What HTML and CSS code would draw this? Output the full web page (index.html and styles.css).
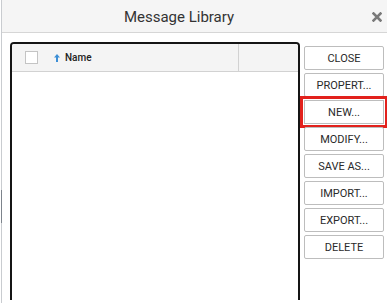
FILE: index.html
```html
<!DOCTYPE html>
<html lang="en">
<head>
    <meta charset="UTF-8">
    <title>Message Library</title>
    <link rel="stylesheet" href="styles.css">
</head>
<body>
    <div class="dialog">
        <span class="edge-thumb"></span>
        <div class="titlebar">
            <div class="title">Message Library</div>
            <svg class="close-x" width="10" height="10" viewBox="0 0 10 10">
                <path d="M1.5 1.5 L8.5 8.5 M8.5 1.5 L1.5 8.5" stroke="#7a7a7a" stroke-width="2.6" stroke-linecap="square"/>
            </svg>
        </div>

        <div class="content">
            <div class="table">
                <div class="thead">
                    <div class="col-check"><span class="checkbox"></span></div>
                    <div class="col-name">
                        <svg class="sort" width="6" height="8" viewBox="0 0 6 8">
                            <path d="M3 0 L6 3.5 L4 3.5 L4 8 L2 8 L2 3.5 L0 3.5 Z" fill="#3d8fd6"/>
                        </svg>
                        Name
                    </div>
                    <div class="col-extra"></div>
                </div>
            </div>

            <div class="actions">
                <button class="btn">CLOSE</button>
                <button class="btn">PROPERT...</button>
                <button class="btn btn-marked">NEW...</button>
                <button class="btn">MODIFY...</button>
                <button class="btn">SAVE AS...</button>
                <button class="btn">IMPORT...</button>
                <button class="btn">EXPORT...</button>
                <button class="btn">DELETE</button>
            </div>
        </div>
    </div>
</body>
</html>
```

FILE: styles.css
```css
html, body { margin: 0; height: 303px; overflow: hidden; background: #fff; }
body { font-family: Roboto, "Liberation Sans", sans-serif; color: #333; }

.dialog { position: relative; margin-left: 1px; border-left: 1px solid #c9ccd0; height: 303px; }
.edge-thumb { position: absolute; left: -1px; top: 190px; width: 1px; height: 33px; background: #7d848c; }

.titlebar { height: 32px; background: #f5f5f5; border-bottom: 1px solid #d6d6d6; display: flex; align-items: center; position: relative; }
.title { flex: 1; text-align: center; font-size: 15px; color: #333; padding-right: 31px; padding-top: 1px; }
.close-x { position: absolute; right: 5px; top: 12px; }

.content { display: flex; align-items: flex-start; padding: 9px 0 0 8px; gap: 4px; }

.table { width: 286px; height: 256px; border: 2px solid #151515; border-bottom: 0; border-radius: 4px 4px 0 0; }
.thead { display: flex; height: 27px; background: #f4f4f4; border-bottom: 1px solid #d2d2d2; border-radius: 2px 2px 0 0; }
.col-check { width: 35px; display: flex; align-items: center; justify-content: center; padding-left: 2px; }
.checkbox { width: 11px; height: 11px; background: #fff; border: 1px solid #c4c4c4; }
.col-name { width: 184px; display: flex; align-items: center; gap: 5px; padding-left: 5px; font-size: 10px; font-weight: 500; color: #222; border-right: 1px solid #d2d2d2; }
.col-extra { flex: 1; }

.actions { display: flex; flex-direction: column; gap: 3px; padding-top: 4px; }
.btn { width: 80px; height: 24px; padding: 0; background: #fff; border: 1px solid #bdbdbd; border-radius: 2px; font-family: Roboto, "Liberation Sans", sans-serif; font-size: 11px; color: #2a2a2a; }
.btn-marked { border-radius: 0; outline: 3px solid #e2211c; outline-offset: 1px; }
```
